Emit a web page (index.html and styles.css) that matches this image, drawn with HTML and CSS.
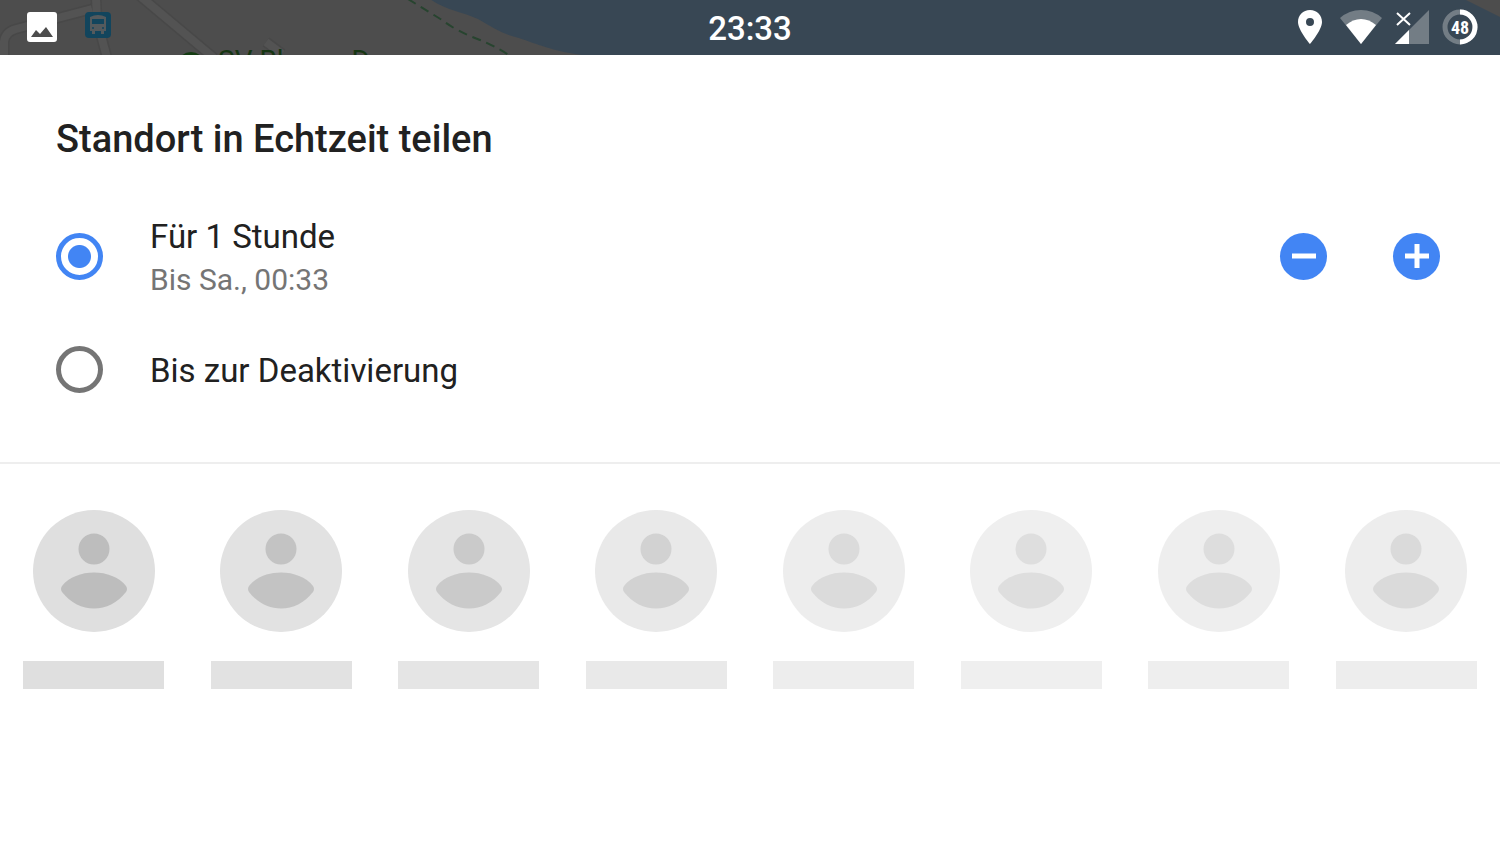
FILE: index.html
```
<!DOCTYPE html>
<html lang="de">
<head>
    <meta charset="UTF-8">
    <meta name="viewport" content="width=device-width, initial-scale=1">
    <title>Standort in Echtzeit teilen</title>
    <link rel="stylesheet" href="styles.css">
</head>
<body>
<header id="status">
    <svg class="map" viewBox="0 0 1500 55" preserveAspectRatio="xMidYMin slice" aria-hidden="true">
        <rect width="1500" height="55" fill="#4d4d4d"/>
        <g fill="none" stroke="#484848" stroke-width="11">
            <path d="M4 58V42Q5 32 16 29L92 9"/>
            <path d="M96 -2L97 20L107 58"/>
            <path d="M140 -4L214 58"/>
            <path d="M266 42L282 54"/>
        </g>
        <g fill="none" stroke="#535353" stroke-width="8">
            <path d="M4 58V42Q5 32 16 29L92 9"/>
            <path d="M96 -2L97 20L107 58"/>
            <path d="M140 -4L214 58"/>
            <path d="M266 42L282 54"/>
        </g>
        <path d="M430 -1C445 10 463 12 478 19C492 27 504 35 519 38C537 44 552 51 582 55H1500V17L1464 -1Z" fill="#384754"/>
        <path d="M408 -1L442 20Q456 31 480 40Q495 46 512 57" fill="none" stroke="#27442f" stroke-width="2" stroke-dasharray="9 6"/>
        <rect x="85" y="12" width="26" height="26" rx="4" fill="#12455d"/>
        <path d="M90 17Q98 13 106 17V31H104V34H101V31H95V34H92V31H90Z" fill="#545a5d"/>
        <path d="M92 19H104V24H92Z" fill="#12455d"/>
        <circle cx="93" cy="28" r="1" fill="#12455d"/>
        <circle cx="103" cy="28" r="1" fill="#12455d"/>
        <circle cx="191" cy="66" r="14" fill="#153d13"/>
        <text x="218" y="70" class="map-label">SV Blauen Donau</text>
    </svg>
    <div class="status-side">
        <svg class="photo" width="30" height="30" viewBox="0 0 30 30" aria-hidden="true">
            <path d="M3 0H27Q30 0 30 3V27Q30 30 27 30H3Q0 30 0 27V3Q0 0 3 0ZM4 25H26L19 15L13 22L9 18Z" fill="#fff" fill-rule="evenodd"/>
        </svg>
    </div>
    <time class="clock">23:33</time>
    <div class="status-side status-right">
        <svg class="pin" width="24" height="34" viewBox="0 0 24 34" aria-hidden="true">
            <path d="M12 0C5 0 0 5 0 12C0 20 12 34 12 34S24 20 24 12C24 5 19 0 12 0ZM12 8A4 4 0 1 1 12 16A4 4 0 1 1 12 8Z" fill="#fff" fill-rule="evenodd"/>
        </svg>
        <svg class="wifi" width="42" height="34" viewBox="0 0 42 34" aria-hidden="true">
            <path d="M0 8Q9 0 21 0T42 8L21 34Z" fill="#737d85"/>
            <path d="M6 15Q13 9 21 9T36 15L21 34Z" fill="#fff"/>
        </svg>
        <svg class="signal" width="34" height="34" viewBox="0 0 34 34" aria-hidden="true">
            <path d="M34 0V34H0Z" fill="#737d85"/>
            <path d="M14 20V34H0Z" fill="#fff"/>
            <path d="M2 3L15 15M15 3L2 15" stroke="#fff" stroke-width="2"/>
        </svg>
        <svg width="36" height="36" viewBox="0 0 36 36" aria-label="Akku 48 %">
            <circle cx="18" cy="18" r="15" fill="none" stroke="#737d85" stroke-width="5"/>
            <path d="M18 3A15 15 0 0 1 18 33" fill="none" stroke="#fff" stroke-width="5"/>
            <text x="18" y="25" class="battery-label">48</text>
        </svg>
    </div>
</header>
<main>
    <form id="share">
        <h1>Standort in Echtzeit teilen</h1>
        <div class="option">
            <input type="radio" name="duration" id="hour" checked>
            <label for="hour">
                Für 1 Stunde
                <small>Bis Sa., 00:33</small>
            </label>
            <div class="steps">
                <button type="button" aria-label="Weniger">
                    <svg width="24" height="24" viewBox="0 0 24 24"><path d="M0 12H24" stroke="#fff" stroke-width="5"/></svg>
                </button>
                <button type="button" aria-label="Mehr">
                    <svg width="24" height="24" viewBox="0 0 24 24"><path d="M0 12H24M12 0V24" stroke="#fff" stroke-width="5"/></svg>
                </button>
            </div>
        </div>
        <div class="option">
            <input type="radio" name="duration" id="endless">
            <label for="endless">Bis zur Deaktivierung</label>
        </div>
    </form>
    <!-- placeholders while the contacts load -->
    <ul id="people"></ul>
</main>
<script>
    var oPeople = document.getElementById("people");
    var aShade = [1, 0.9, 0.8, 0.68, 0.54, 0.49, 0.5, 0.55];
    for (var i = 0; i < aShade.length; i++) {
        oPeople.innerHTML +=
            '<li style="opacity:' + aShade[i] + '">' +
            '<svg width="122" height="122" viewBox="0 0 122 122">' +
            '<circle cx="61" cy="61" r="61" fill="#dfdfdf"/>' +
            '<circle cx="61" cy="39" r="15.5" fill="#bdbdbd"/>' +
            '<path d="M29 76C43 58 79 58 93 76Q95 79 93 82C76 104 46 104 29 82Q27 79 29 76Z" fill="#bdbdbd"/>' +
            '</svg>' +
            '<span class="name"></span>' +
            '</li>';
    }
</script>
</body>
</html>
```
FILE: styles.css
```
*{
    margin: 0;
    padding: 0;
    box-sizing: border-box;
}
body{
    background-color: #fff;
    color: #212121;
    font-family: Roboto, "Liberation Sans", sans-serif;
}
#status{
    position: relative;
    display: flex;
    align-items: center;
    height: 55px;
    padding: 0 22px;
    color: #fff;
    overflow: hidden;
}
.map{
    position: absolute;
    top: 0;
    left: 0;
    width: 100%;
    height: 100%;
}
.map-label{
    font-size: 28px;
    fill: #163613;
}
.status-side{
    position: relative;
    flex: 1;
    display: flex;
    align-items: center;
    padding-bottom: 1px;
}
.status-right{
    justify-content: flex-end;
}
.photo{
    margin-left: 5px;
}
.pin{
    margin-right: 18px;
}
.wifi,.signal{
    margin-right: 13px;
}
.clock{
    position: relative;
    padding-top: 2px;
    font-size: 33px;
    font-weight: 500;
    line-height: 48px;
}
.battery-label{
    font-family: "Roboto Condensed", Roboto, sans-serif;
    font-size: 18px;
    font-weight: 700;
    text-anchor: middle;
    fill: #fff;
}
#share{
    padding: 60px 60px 28px 56px;
    border-bottom: 2px solid #eee;
}
h1{
    margin-bottom: 45px;
    font-size: 38px;
    font-weight: 500;
    line-height: 48px;
}
.option{
    display: flex;
    align-items: center;
    min-height: 96px;
    margin-bottom: 17px;
}
.option input{
    appearance: none;
    width: 47px;
    height: 47px;
    margin-right: 47px;
    border: 5px solid #757575;
    border-radius: 50%;
}
.option input:checked{
    border-color: #4285f4;
    background: radial-gradient(circle, #4285f4 11px, transparent 12px);
}
.option label{
    flex: 1;
    padding-top: 4px;
    font-size: 33px;
    line-height: 44px;
}
.option small{
    display: block;
    color: #757575;
    font-size: 30px;
    line-height: 42px;
}
.steps{
    display: flex;
    gap: 66px;
}
.steps button{
    display: flex;
    align-items: center;
    justify-content: center;
    width: 47px;
    height: 47px;
    border: none;
    border-radius: 50%;
    background-color: #4285f4;
    cursor: pointer;
}
#people{
    display: grid;
    grid-template-columns: repeat(8, 1fr);
    padding-top: 46px;
    list-style: none;
}
#people li{
    display: flex;
    flex-direction: column;
    align-items: center;
    gap: 29px;
}
.name{
    width: 75%;
    height: 28px;
    background-color: #dfdfdf;
}
```
